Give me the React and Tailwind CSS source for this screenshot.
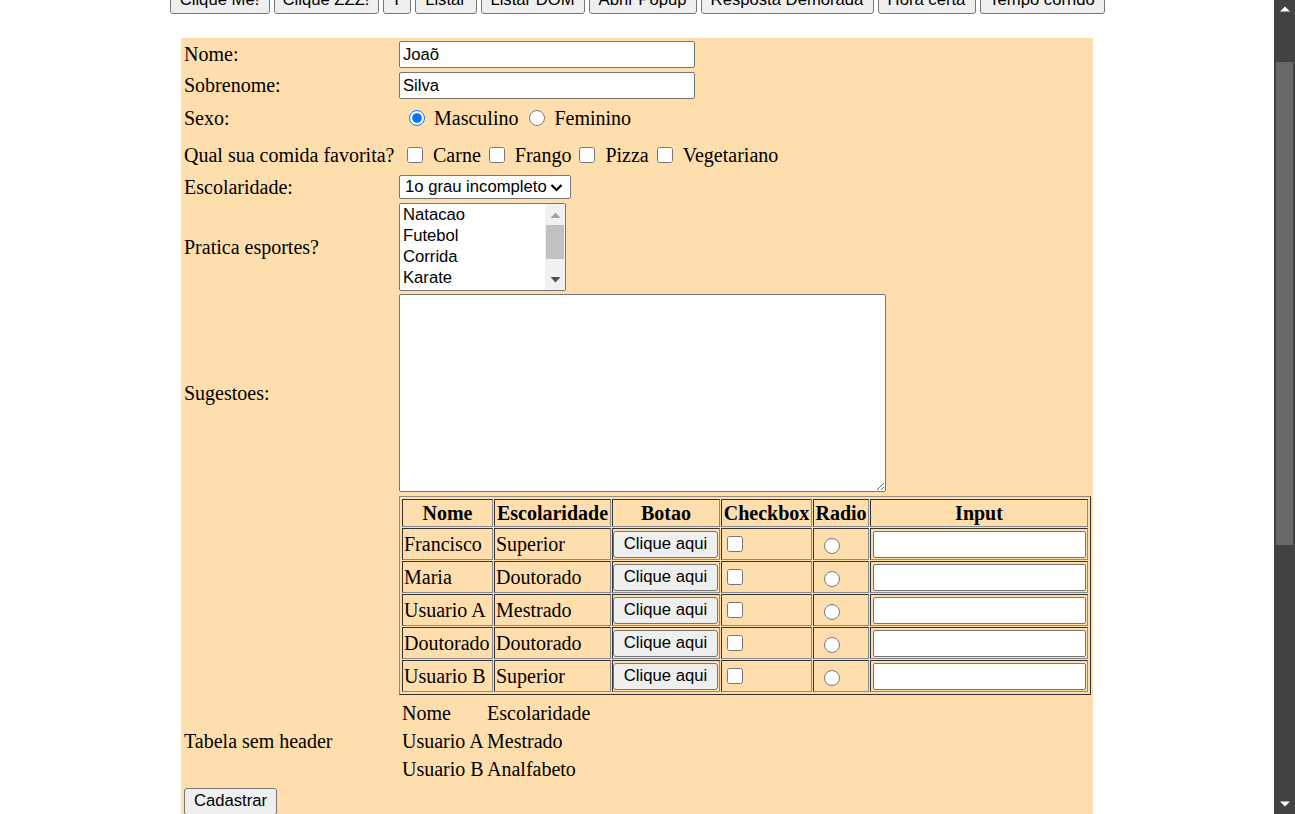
import React from "react";

const topButtons = [
  { label: "Clique Me!", w: "w-[100px]" },
  { label: "Clique ZZZ!", w: "w-[105px]" },
  { label: "T", w: "w-[28px]" },
  { label: "Listar", w: "w-[62px]" },
  { label: "Listar DOM", w: "w-[104px]" },
  { label: "Abrir Popup", w: "w-[108px]" },
  { label: "Resposta Demorada", w: "w-[173px]" },
  { label: "Hora certa", w: "w-[98px]" },
  { label: "Tempo corrido", w: "w-[125px]" },
];

const rows = [
  ["Francisco", "Superior"],
  ["Maria", "Doutorado"],
  ["Usuario A", "Mestrado"],
  ["Doutorado", "Doutorado"],
  ["Usuario B", "Superior"],
];

const sans = "font-['Liberation_Sans',Arial,sans-serif] text-[16.67px]";
const cell =
  "border border-t-[#333333] border-l-[#333333] border-r-[#8a8a8a] border-b-[#8a8a8a] flex items-center";
const btn =
  "bg-[#efefef] border border-[#767676] rounded-[3px] flex items-center justify-center text-black font-['Liberation_Sans',Arial,sans-serif] text-[16.67px] leading-none";
const textInput =
  "bg-white border border-[#767676] rounded-[2px] px-[3px] text-black font-['Liberation_Sans',Arial,sans-serif] text-[16.67px] outline-none";

function Label({ children }) {
  return <div className="w-[215px] shrink-0 leading-[23px]">{children}</div>;
}

export default function App() {
  return (
    <div className="flex h-[814px] w-[1295px] overflow-hidden bg-white text-black font-['Liberation_Serif','Times_New_Roman',serif] text-[20px]">
      <div className="flex w-[1274px] shrink-0 flex-col items-center">
        {/* top buttons */}
        <div className="-mt-[13px] flex gap-[4px]">
          {topButtons.map((b) => (
            <button key={b.label} className={`${btn} ${b.w} h-[27px] whitespace-nowrap`}>
              {b.label}
            </button>
          ))}
        </div>

        {/* form box */}
        <div className="mt-[24px] flex w-[912px] flex-col bg-[#ffdead] pl-[3px] pt-[3px] pb-[20px]">
          <div className="flex h-[27px] items-center">
            <Label>Nome:</Label>
            <input className={`${textInput} h-[27px] w-[296px]`} defaultValue="Joaõ" />
          </div>
          <div className="mt-[4px] flex h-[27px] items-center">
            <Label>Sobrenome:</Label>
            <input className={`${textInput} h-[27px] w-[296px]`} defaultValue="Silva" />
          </div>
          <div className="flex h-[38px] items-center">
            <Label>Sexo:</Label>
            <div className="flex items-center">
              <input type="radio" name="sexo" defaultChecked className="m-0 ml-[10px] h-4 w-4" />
              <span className="ml-[9px]">Masculino</span>
              <input type="radio" name="sexo" className="m-0 ml-[11px] h-4 w-4" />
              <span className="ml-[9px]">Feminino</span>
            </div>
          </div>
          <div className="flex h-[36px] items-center">
            <div className="w-[215px] shrink-0 whitespace-nowrap leading-[23px]">Qual sua comida favorita?</div>
            <div className="flex items-center">
              <input type="checkbox" className="m-0 ml-[8px] h-4 w-4" />
              <span className="ml-[10px]">Carne</span>
              <input type="checkbox" className="m-0 ml-[8px] h-4 w-4" />
              <span className="ml-[10px]">Frango</span>
              <input type="checkbox" className="m-0 ml-[8px] h-4 w-4" />
              <span className="ml-[10px]">Pizza</span>
              <input type="checkbox" className="m-0 ml-[8px] h-4 w-4" />
              <span className="ml-[10px]">Vegetariano</span>
            </div>
          </div>
          <div className="mt-[2px] flex h-[24px] items-center">
            <Label>Escolaridade:</Label>
            <div className={`${sans} flex h-[24px] w-[172px] items-center justify-between rounded-[2px] border border-[#767676] bg-white pl-[5px] pr-[7px] leading-none`}>
              <span>1o grau incompleto</span>
              <svg width="13" height="9" viewBox="0 0 13 9">
                <path d="M1.5 2 L6.5 7 L11.5 2" fill="none" stroke="#000" strokeWidth="2.2" />
              </svg>
            </div>
          </div>
          <div className="mt-[4px] flex h-[88px] items-center">
            <Label>Pratica esportes?</Label>
            <div className={`${sans} flex h-[88px] w-[167px] overflow-hidden rounded-[2px] border border-[#767676] bg-white`}>
              <div className="flex-1 pl-[3px] leading-[19px]">
                {["Natacao", "Futebol", "Corrida", "Karate"].map((s) => (
                  <div key={s} className="flex h-[21px] items-center">
                    {s}
                  </div>
                ))}
              </div>
              <div className="flex w-[20px] flex-col bg-[#f1f1f1]">
                <div className="flex h-[21px] items-center justify-center">
                  <svg width="11" height="6" viewBox="0 0 11 6">
                    <path d="M0.5 6 L5.5 0.5 L10.5 6 Z" fill="#a3a3a3" />
                  </svg>
                </div>
                <div className="mx-[1px] h-[34px] bg-[#c1c1c1]" />
                <div className="flex-1" />
                <div className="flex h-[21px] items-center justify-center">
                  <svg width="11" height="6" viewBox="0 0 11 6">
                    <path d="M0.5 0 L5.5 5.5 L10.5 0 Z" fill="#505050" />
                  </svg>
                </div>
              </div>
            </div>
          </div>
          <div className="mt-[3px] flex h-[198px] items-center">
            <Label>Sugestoes:</Label>
            <textarea className={`${sans} h-[198px] w-[487px] resize rounded-[2px] border border-[#767676] bg-white outline-none`} />
          </div>
          <div className="mt-[4px] flex items-start">
            <div className="flex h-[199px] w-[215px] shrink-0 items-center" />
            <div className="border border-t-[#8a8a8a] border-l-[#8a8a8a] border-r-[#333333] border-b-[#333333] p-[2px]">
              <div className="grid grid-cols-[91px_117px_108px_91px_56px_218px] gap-x-[1px] gap-y-[1px]">
                {["Nome", "Escolaridade", "Botao", "Checkbox", "Radio", "Input"].map((h) => (
                  <div key={h} className={`${cell} h-[28px] justify-center font-bold leading-[23px]`}>
                    {h}
                  </div>
                ))}
                {rows.map((r, i) => (
                  <React.Fragment key={i}>
                    <div className={`${cell} h-[32px] pl-[1px] whitespace-nowrap`}>{r[0]}</div>
                    <div className={`${cell} h-[32px] pl-[1px] whitespace-nowrap`}>{r[1]}</div>
                    <div className={`${cell} h-[32px]`}>
                      <button className={`${btn} h-[27px] w-[105px]`}>Clique aqui</button>
                    </div>
                    <div className={`${cell} h-[32px]`}>
                      <input type="checkbox" className="m-0 ml-[5px] h-4 w-4" />
                    </div>
                    <div className={`${cell} h-[32px]`}>
                      <input type="radio" name="tabela" className="m-0 ml-[10px] mt-[3px] h-4 w-4" />
                    </div>
                    <div className={`${cell} h-[32px]`}>
                      <input className={`${textInput} ml-[2px] h-[27px] w-[213px]`} />
                    </div>
                  </React.Fragment>
                ))}
              </div>
            </div>
          </div>
          <div className="mt-[4px] flex h-[84px] items-center">
            <Label>Tabela sem header</Label>
            <div className="flex flex-col pl-[3px]">
              {[
                ["Nome", "Escolaridade"],
                ["Usuario A", "Mestrado"],
                ["Usuario B", "Analfabeto"],
              ].map((r, i) => (
                <div key={i} className="flex h-[28px] items-center whitespace-nowrap">
                  <span className="w-[85px]">{r[0]}</span>
                  <span>{r[1]}</span>
                </div>
              ))}
            </div>
          </div>
          <div className="mt-[5px] flex">
            <button className={`${btn} h-[27px] w-[93px]`}>Cadastrar</button>
          </div>
        </div>
      </div>

      {/* page scrollbar */}
      <div className="flex w-[21px] shrink-0 flex-col bg-[#424242]">
        <div className="flex h-[17px] items-center justify-center">
          <svg width="10" height="6" viewBox="0 0 10 6">
            <path d="M0 5.5 L5 0.5 L10 5.5 Z" fill="#ffffff" />
          </svg>
        </div>
        <div className="h-[45px]" />
        <div className="mx-[2px] h-[483px] bg-[#686868]" />
        <div className="flex-1" />
        <div className="flex h-[20px] items-center justify-center">
          <svg width="10" height="6" viewBox="0 0 10 6">
            <path d="M0 0.5 L5 5.5 L10 0.5 Z" fill="#ffffff" />
          </svg>
        </div>
      </div>
    </div>
  );
}
